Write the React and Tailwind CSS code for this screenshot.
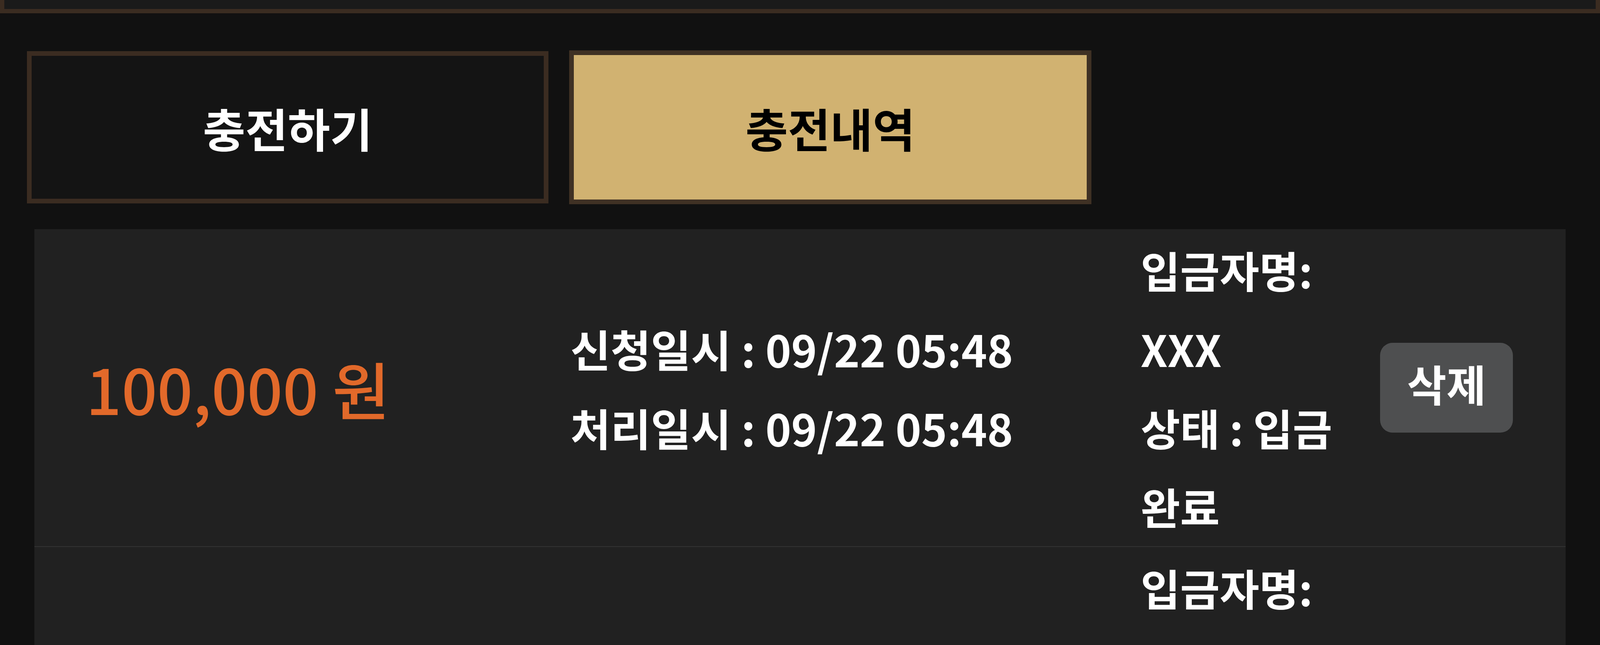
const rows = [
  {
    amount: "100,000 원",
    requested: "09/22 05:48",
    processed: "09/22 05:48",
    depositor: "XXX",
    status: "입금 완료",
  },
  {
    amount: "100,000 원",
    requested: "09/22 05:48",
    processed: "09/22 05:48",
    depositor: "XXX",
    status: "입금 완료",
  },
];

function HistoryRow({ row, last }) {
  return (
    <div
      className={`flex items-center bg-[#212121] py-[2px] ${
        last ? "" : "border-b-2 border-[#333333]"
      }`}
    >
      {/* amount */}
      <div className="w-[1042px] shrink-0 flex justify-center">
        <span className="text-[160px] leading-none font-medium text-[#e2692a]">
          {row.amount}
        </span>
      </div>

      {/* dates */}
      <div className="w-[1790px] shrink-0 pl-[330px] text-[112px] leading-[202px] font-bold text-white">
        <p>신청일시 : {row.requested}</p>
        <p>처리일시 : {row.processed}</p>
      </div>

      {/* depositor + status */}
      <div className="w-[600px] shrink-0 text-[110px] leading-[202px] font-bold text-white">
        <p>입금자명: {row.depositor}</p>
        <p>상태 : {row.status}</p>
      </div>

      {/* delete */}
      <div className="flex-1 flex justify-end pr-[135px]">
        <button className="w-[340px] h-[230px] rounded-[32px] bg-[#4e4f50] text-white text-[110px] font-bold leading-none pb-[24px]">
          삭제
        </button>
      </div>
    </div>
  );
}

export default function App() {
  return (
    <div className="h-screen overflow-hidden bg-[#111111] font-['Noto_Sans_CJK_KR','Noto_Sans',sans-serif]">
      {/* bottom edge of the panel above */}
      <div className="h-[34px] bg-[#1a1a1a] border-x-[11px] border-b-[11px] border-[#3b2c21]" />

      {/* tabs */}
      <div className="flex items-start gap-[53px] pl-[69px] mt-[95px]">
        <button className="mt-[2px] w-[1335px] h-[390px] border-[12px] border-[#3b2c21] bg-[#141414] text-white text-[118px] font-bold flex items-center justify-center">
          충전하기
        </button>
        <button className="w-[1337px] h-[394px] border-[12px] border-[#3f3124] bg-[#d1b271] text-black text-[118px] font-bold flex items-center justify-center">
          충전내역
        </button>
      </div>

      {/* history list */}
      <div className="mx-[88px] mt-[64px]">
        {rows.map((row, i) => (
          <HistoryRow key={i} row={row} last={i === rows.length - 1} />
        ))}
      </div>
    </div>
  );
}
